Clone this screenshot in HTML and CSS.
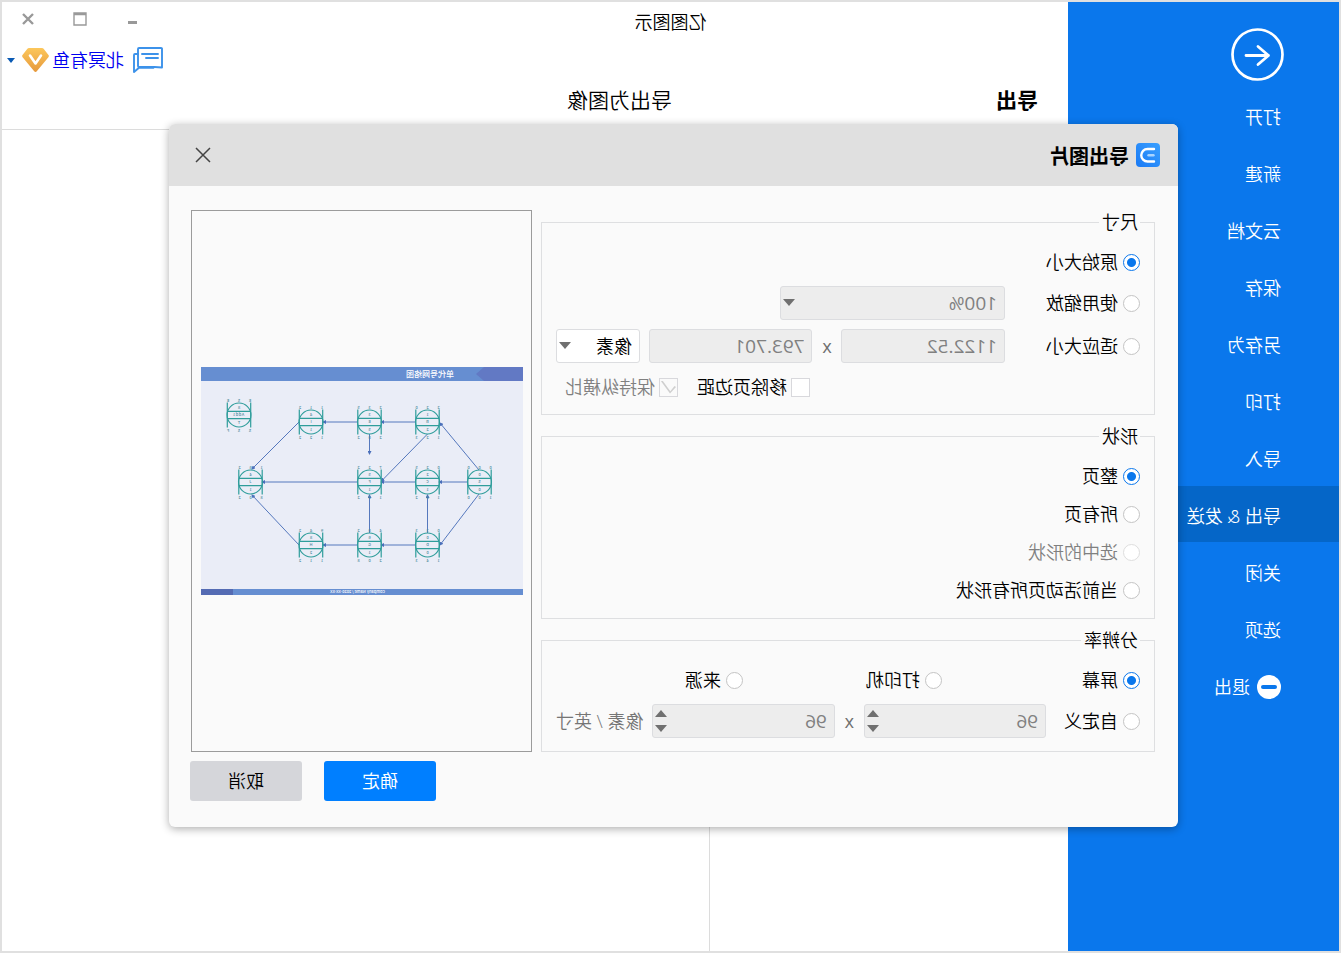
FILE: index.html
```html
<!DOCTYPE html>
<html lang="zh-CN">
<head>
<meta charset="utf-8">
<title>亿图图示</title>
<link rel="stylesheet" href="styles.css">
</head>
<body>
<div class="window">
  <aside class="sidebar">
    <button class="back" type="button" aria-label="返回">
      <svg viewBox="0 0 53 53" fill="none" stroke="#fff"><circle cx="26.500" cy="26.500" r="25" stroke-width="2.700"/><path d="M38 27.500H15.500M26 18.500l-10.500 9 10.500 9" stroke-width="2.800" stroke-linecap="round" stroke-linejoin="round"/></svg>
    </button>
    <nav class="menu">
      <a class="item" href="#">打开</a>
      <a class="item" href="#">新建</a>
      <a class="item" href="#">云文档</a>
      <a class="item" href="#">保存</a>
      <a class="item" href="#">另存为</a>
      <a class="item" href="#">打印</a>
      <a class="item" href="#">导入</a>
      <a class="item active" href="#">导出 &amp; 发送</a>
      <a class="item" href="#">关闭</a>
      <a class="item" href="#">选项</a>
      <a class="item" href="#"><svg class="exit-icon" viewBox="0 0 24 24"><circle cx="12" cy="12" r="12" fill="#fff"/><rect x="4" y="10" width="16" height="4" rx="2" fill="#0a77ec"/></svg>退出</a>
    </nav>
  </aside>

  <main class="main">
    <header class="titlebar">
      <h1 class="app-title">亿图图示</h1>
      <div class="controls">
        <button type="button" aria-label="最小化"><svg viewBox="0 0 14 14"><path d="M2 9h9v3H2z" fill="#999"/></svg></button>
        <button type="button" aria-label="最大化"><svg viewBox="0 0 14 14"><path d="M1 1h12v12H1zM1 2.500h12" fill="none" stroke="#999" stroke-width="1.400"/></svg></button>
        <button type="button" aria-label="关闭"><svg viewBox="0 0 14 14"><path d="M2 2l10 10M12 2L2 12" stroke="#999" stroke-width="2.400"/></svg></button>
      </div>
    </header>
    <div class="account">
      <svg class="chat" viewBox="0 0 30 26" fill="none" stroke="#3c92ea" stroke-width="1.900" stroke-linejoin="round" stroke-linecap="round"><path d="M2 1h22q1 0 1 1v17q0 1-1 1H8.500L1 20.500V2q0-1 1-1z"/><path d="M5 7h16M5 11h12"/><path d="M25 7h3q1 0 1 1v17l-5-4.200H9.500"/></svg>
      <a class="user" href="#">北冥有鱼</a>
      <svg class="gem" viewBox="0 0 27 24"><defs><linearGradient id="gold" x2="0" y2="1"><stop stop-color="#fcc75b"/><stop offset="1" stop-color="#e6993c"/></linearGradient></defs><path d="M7 0h13q1 0 1.600.8L26.500 7q.8 1-.1 2.200L15 23q-1.500 1.800-3 0L.6 9.200Q-.3 8 .5 7L5.400.8Q6 0 7 0z" fill="url(#gold)"/><path d="M8 7.500l5.500 8 5.500-8" fill="none" stroke="#fff" stroke-width="2.600" stroke-linecap="round" stroke-linejoin="round"/></svg>
      <svg class="caret" viewBox="0 0 8 5"><path d="M0 0h8L4 5z" fill="#0a5ab4"/></svg>
    </div>
    <div class="headings">
      <h2 class="heading strong">导出</h2>
      <h2 class="heading sub">导出为图像</h2>
    </div>
    <div class="panes"><div class="pane-list"></div><div class="pane-detail"></div></div>
  </main>

  <form class="dialog" role="dialog" aria-labelledby="dialog-title">
    <header class="dialog-head">
      <svg class="logo" viewBox="0 0 24 24"><defs><linearGradient id="sky" x2="1" y2="1"><stop stop-color="#3aa0ff"/><stop offset="1" stop-color="#1a7af5"/></linearGradient></defs><rect width="24" height="24" rx="4" fill="url(#sky)"/><path d="M6 6h6.500a6 6 0 0 1 0 12.500H6" fill="none" stroke="#fff" stroke-width="2.400" stroke-linecap="round"/><path d="M6.500 12.300h5" stroke="#a9d4ff" stroke-width="2.400" stroke-linecap="round"/></svg>
      <h2 class="dialog-title" id="dialog-title">导出图片</h2>
      <button class="close" type="button" aria-label="关闭"><svg viewBox="0 0 16 16"><path d="M1 1l14 14M15 1L1 15" stroke="#444" stroke-width="1.500"/></svg></button>
    </header>

    <div class="dialog-body">
      <div class="settings">
        <fieldset class="group size">
          <legend>尺寸</legend>
          <div class="row short"><label class="choice"><input type="radio" name="size" checked>原始大小</label></div>
          <div class="row">
            <label class="choice"><input type="radio" name="size">使用缩放</label>
            <span class="select scale"><select disabled aria-label="缩放"><option>100%</option></select></span>
          </div>
          <div class="row fit">
            <label class="choice"><input type="radio" name="size">适应大小</label>
            <input class="field" type="text" value="1122.52" disabled aria-label="宽度">
            <span class="times">x</span>
            <input class="field" type="text" value="793.701" disabled aria-label="高度">
            <span class="select unit"><select aria-label="单位"><option>像素</option></select></span>
          </div>
          <div class="row checks">
            <label class="check"><input type="checkbox">移除页边距</label>
            <label class="check off"><input type="checkbox" checked disabled>保持纵横比</label>
          </div>
        </fieldset>

        <fieldset class="group shape">
          <legend>形状</legend>
          <label class="choice"><input type="radio" name="shape" checked>整页</label>
          <label class="choice"><input type="radio" name="shape">所有页</label>
          <label class="choice off"><input type="radio" name="shape" disabled>选中的形状</label>
          <label class="choice"><input type="radio" name="shape">当前活动页所有形状</label>
        </fieldset>

        <fieldset class="group resolution">
          <legend>分辨率</legend>
          <div class="row short thirds">
            <label class="choice"><input type="radio" name="dpi" checked>屏幕</label>
            <label class="choice"><input type="radio" name="dpi">打印机</label>
            <label class="choice"><input type="radio" name="dpi">来源</label>
          </div>
          <div class="row custom">
            <label class="choice"><input type="radio" name="dpi">自定义</label>
            <span class="spin"><input class="field" type="number" value="96" disabled aria-label="水平分辨率"></span>
            <span class="times">x</span>
            <span class="spin"><input class="field" type="number" value="96" disabled aria-label="垂直分辨率"></span>
            <span class="per">像素 / 英寸</span>
          </div>
        </fieldset>
      </div>

      <div class="preview">
        <svg viewBox="0 0 322 228" role="img" aria-label="单代号网络图">
          <defs>
            <g id="node" fill="none" stroke="#2f9d9b"><circle r="12" stroke-width="1.100"/><path d="M-11.700-12.500v25M11.700-12.500v25M-11.700-3.700h23.400M-11.700 3.700h23.400" stroke-width="1.200"/></g>
            <marker id="dot" viewBox="0 0 4 4" refX="3" refY="2" markerWidth="4" markerHeight="4" markerUnits="userSpaceOnUse" orient="auto"><path d="M0 0l4 2-4 2z" fill="#4a6fba"/></marker>
          </defs>
          <path d="M0 0h322v228H0z" fill="#eaedf7"/>
          <path d="M0 0h322v14H0z" fill="#668ed1"/>
          <path d="M0 0h39l8 7-8 7H0z" fill="#6279c4"/>
          <text class="chart-title" x="69" y="10">单代号网络图</text>
          <path d="M0 222h322v6H0z" fill="#668ed1"/>
          <path d="M290 222h32v6h-32z" fill="#546bb3"/>
          <text class="chart-foot" x="138" y="226">Company Name / 2020-XX-XX</text>
          <g class="edges" marker-end="url(#dot)">
            <path d="M107 55h35"/><path d="M165 55h35"/><path d="M224 55l47 47"/>
            <path d="M55 115h29"/><path d="M107 115h35"/><path d="M165 115h96"/>
            <path d="M107 178h35"/><path d="M165 178h35"/><path d="M224 178l47-50"/>
            <path d="M44 103l39-47"/><path d="M44 127l39 51"/>
            <path d="M95.500 67l46 47"/><path d="M153.500 67v20"/>
            <path d="M95.500 166v-38"/><path d="M153.500 166v-38"/>
          </g>
          <g class="nodes">
            <g transform="translate(284 48)"><use href="#node"/><text x="-11 0 11 0 -4 -1 2 5 0 -11 0 11" y="-13 -13 -13 -6 1 1 1 1 9 17 17 17">ESE8Add1TSSF</text></g>
            <g transform="translate(95.500 55)"><use href="#node"/><text x="-11 0 11 0 0 0 -11 0 11" y="-13 -13 -13 -6 1 9 17 17 17">2201B2123</text></g>
            <g transform="translate(153.500 55)"><use href="#node"/><text x="-11 0 11 0 0 0 -11 0 11" y="-13 -13 -13 -6 1 9 17 17 17">2353E5202</text></g>
            <g transform="translate(212 55)"><use href="#node"/><text x="-11 0 11 0 0 0 -11 0 11" y="-13 -13 -13 -6 1 9 17 17 17">1124I1122</text></g>
            <g transform="translate(43.500 115)"><use href="#node"/><text x="-11 0 11 0 0 0 -11 0 11" y="-13 -13 -13 -6 1 9 17 17 17">0000S0100</text></g>
            <g transform="translate(95.500 115)"><use href="#node"/><text x="-11 0 11 0 0 0 -11 0 11" y="-13 -13 -13 -6 1 9 17 17 17">0252C1102</text></g>
            <g transform="translate(153.500 115)"><use href="#node"/><text x="-11 0 11 0 0 0 -11 0 11" y="-13 -13 -13 -6 1 9 17 17 17">7225F1102</text></g>
            <g transform="translate(272.500 115)"><use href="#node"/><text x="-11 0 11 0 0 0 -11 0 11" y="-13 -13 -13 -6 1 9 17 17 17">1624J1802</text></g>
            <g transform="translate(95.500 178)"><use href="#node"/><text x="-11 0 11 0 0 0 -11 0 11" y="-13 -13 -13 -6 1 9 17 17 17">0330D0143</text></g>
            <g transform="translate(153.500 178)"><use href="#node"/><text x="-11 0 11 0 0 0 -11 0 11" y="-13 -13 -13 -6 1 9 17 17 17">4026G1208</text></g>
            <g transform="translate(212 178)"><use href="#node"/><text x="-11 0 11 0 0 0 -11 0 11" y="-13 -13 -13 -6 1 9 17 17 17">9428H2112</text></g>
          </g>
        </svg>
      </div>
    </div>

    <footer class="actions">
      <button class="btn primary" type="submit">确定</button>
      <button class="btn" type="button">取消</button>
    </footer>
  </form>
</div>
</body>
</html>
```
FILE: styles.css
```css
* { box-sizing: border-box; }

body {
  margin: 0;
  font: 350 18px/24px "Open Sans", "Noto Sans CJK SC", sans-serif;
  color: #000;
}

h1, h2 { margin: 0; font-weight: inherit; }
button, input, select { font: inherit; color: inherit; }
button { padding: 0; border: 0; background: none; }
svg { display: block; }
a { text-decoration: none; }

/* The whole window is shown flipped left to right. */
.window {
  position: relative;
  display: flex;
  min-height: 100vh;
  border: 2px solid #e0e0e0;
  background: #fff;
  transform: scaleX(-1);
}

.sidebar {
  width: 271px;
  flex: none;
  padding-top: 26px;
  background: #0a77ec;
  color: #fff;
}
.back { display: block; width: 53px; height: 53px; margin: 0 0 6px 55px; }
.menu { display: flex; flex-direction: column; gap: 1px; }
.item {
  display: flex;
  align-items: center;
  gap: 7px;
  height: 56px;
  padding: 3px 0 0 58px;
  color: #fff;
}
.item.active { background: #0566c8; font-family: "Noto Sans", "Noto Sans CJK SC", sans-serif; }
.exit-icon { width: 24px; height: 24px; }

.main { flex: 1; display: flex; flex-direction: column; }
.titlebar {
  display: grid;
  grid-template-columns: 1fr 271px;
  height: 40px;
}
.app-title { font-size: 18px; line-height: 40px; text-align: center; }
.controls { display: flex; justify-content: flex-end; }
.controls button { width: 52px; height: 34px; display: grid; place-items: center; }
.controls svg { width: 14px; height: 14px; }

.account {
  display: flex;
  align-items: center;
  justify-content: flex-end;
  height: 36px;
  padding-right: 5px;
}
.chat { width: 30px; height: 26px; margin-right: 9px; }
.user { color: #0000f0; margin-right: 3px; }
.gem { width: 27px; height: 24px; margin-right: 7px; }
.caret { width: 8px; height: 5px; }

.headings, .panes { display: grid; grid-template-columns: 359px 1fr; }
.headings { padding: 8px 0 15px; border-bottom: 1px solid #dcdcdc; }
.heading { font-size: 21px; line-height: 28px; }
.heading.strong { padding-left: 30px; font-weight: 700; }
.heading.sub { padding-left: 37px; }
.panes { flex: 1; }
.pane-list { border-right: 1px solid #dcdcdc; }

.dialog {
  position: absolute;
  top: 122px;
  left: 161px;
  right: 167px;
  border-radius: 6px;
  background: #fafafa;
  box-shadow: 0 2px 8px rgba(0, 0, 0, 0.32);
}
.dialog-head {
  display: flex;
  align-items: center;
  height: 62px;
  padding: 0 26px 0 18px;
  border-radius: 6px 6px 0 0;
  background: #e0e0e0;
}
.logo { width: 24px; height: 24px; margin-right: 7px; }
.dialog-title { flex: 1; padding-top: 4px; font-size: 20px; line-height: 28px; font-weight: 700; }
.close { width: 16px; height: 16px; }

.dialog-body {
  display: grid;
  grid-template-columns: 1fr 341px;
  gap: 9px;
  padding: 24px 22px 0 23px;
}
.settings { display: flex; flex-direction: column; gap: 9px; }
.group {
  min-width: 0;
  margin: 0;
  padding: 15px 14px 16px;
  border: 1px solid #dedfe1;
}
.group legend { padding: 0 3px 0 2px; line-height: 25px; }
.row { display: flex; align-items: center; height: 34px; }
.row.short { height: 24px; margin-bottom: 12px; }
.row.fit { margin-top: 9px; }
.row.checks { height: 20px; margin-top: 14px; margin-bottom: 1px; justify-content: flex-end; gap: 19px; padding-right: 9px; }
.shape { display: flex; flex-direction: column; gap: 14px; }
.resolution { padding-bottom: 13px; }
.thirds { display: grid; grid-template-columns: 198px 199px 1fr; }

.choice { display: flex; align-items: center; gap: 5px; height: 24px; }
.size .row .choice { width: 135px; flex: none; }
.custom .choice { width: 94px; flex: none; }
.choice input {
  appearance: none;
  width: 17px;
  height: 17px;
  margin: 0;
  border: 1px solid #c4c4c4;
  border-radius: 50%;
  background: #fff;
}
.choice input:checked {
  border-color: #0a77ec;
  background: radial-gradient(circle, #0a77ec 4px, #fff 5px);
}
.off { color: #808080; }
.choice.off input { border-color: #dedede; }

.check { display: flex; align-items: center; gap: 4px; }
.check input {
  appearance: none;
  display: grid;
  place-items: center;
  width: 19px;
  height: 19px;
  margin: 0;
  border: 1px solid #d8d8dc;
  background: #fff;
}
.check input:checked { background: #fafafa; }
.check input:checked::before {
  content: "";
  width: 15px;
  height: 13px;
  background: #cfcfcf;
  clip-path: polygon(0 50%, 10% 42%, 38% 82%, 90% 0, 100% 6%, 40% 100%);
}

.field, .select select {
  appearance: none;
  width: 100%;
  height: 34px;
  margin: 0;
  padding: 0 7px;
  border: 1px solid #dcdde0;
  border-radius: 3px;
  background: #fff;
  font-size: 18px;
  opacity: 1;
}
.field:disabled, .select select:disabled {
  background: #ededed;
  color: #808080;
  font-size: 19px;
  font-weight: 400;
}
.fit .field { flex: 1; min-width: 0; }
.times { width: 29px; flex: none; text-align: center; color: #707070; font-weight: 400; }
.per { margin-left: 9px; color: #757575; white-space: nowrap; }

.select, .spin { position: relative; display: block; }
.scale { width: 225px; }
.unit { width: 84px; margin-left: 9px; }
.spin { flex: 1; min-width: 0; }
.select::after, .spin::before, .spin::after {
  content: "";
  position: absolute;
  right: 3px;
  border: 6px solid transparent;
  border-bottom-width: 0;
  border-top: 7px solid #707070;
  pointer-events: none;
}
.select::after { top: 13px; }
.spin::after { top: 21px; }
.spin::before { top: 6px; transform: rotate(180deg); }
.spin .field { appearance: textfield; }

.preview {
  display: flex;
  align-items: center;
  padding: 0 9px 0 8px;
  border: 1px solid #9b9b9b;
}
.preview svg { width: 100%; }
.preview text { font-family: "Noto Sans CJK SC", sans-serif; font-size: 4px; font-weight: 500; fill: #4f8c9c; text-anchor: middle; }
.preview .chart-title { font-size: 8px; fill: #fff; text-anchor: start; }
.preview .chart-foot { font-size: 4px; fill: #fff; text-anchor: start; }
.edges { fill: none; stroke: #5578bd; stroke-width: 1; }

.actions {
  display: flex;
  justify-content: flex-end;
  gap: 22px;
  padding: 9px 21px 26px;
}
.btn { width: 112px; height: 40px; border-radius: 3px; background: #d5d6da; }
.btn.primary { background: #007fff; color: #fff; }
```
